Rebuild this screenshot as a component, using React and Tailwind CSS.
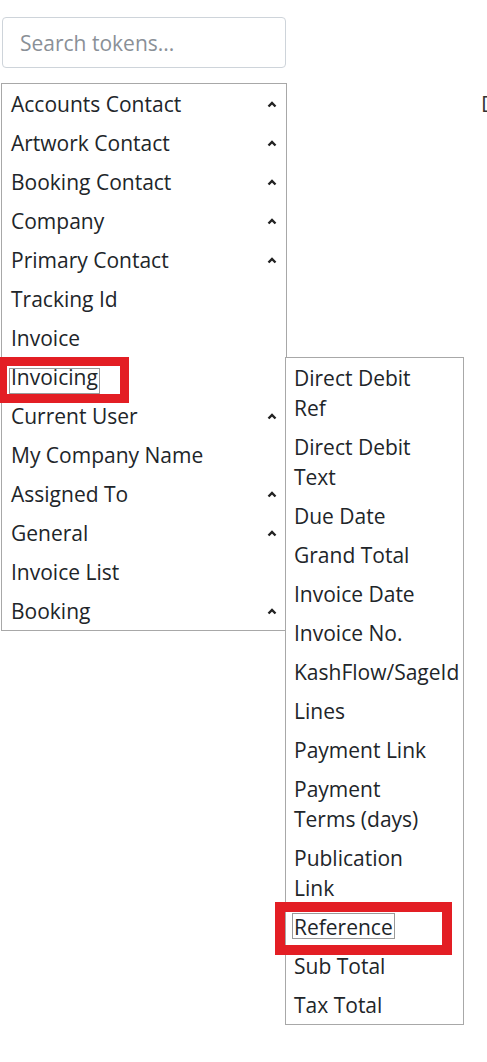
import React from "react";

const mainItems = [
  { label: "Accounts Contact", chevron: true },
  { label: "Artwork Contact", chevron: true },
  { label: "Booking Contact", chevron: true },
  { label: "Company", chevron: true },
  { label: "Primary Contact", chevron: true },
  { label: "Tracking Id" },
  { label: "Invoice" },
  { label: "Invoicing", active: true },
  { label: "Current User", chevron: true },
  { label: "My Company Name" },
  { label: "Assigned To", chevron: true },
  { label: "General", chevron: true },
  { label: "Invoice List" },
  { label: "Booking", chevron: true },
];

const subItems = [
  "Direct Debit Ref",
  "Direct Debit Text",
  "Due Date",
  "Grand Total",
  "Invoice Date",
  "Invoice No.",
  "KashFlow/SageId",
  "Lines",
  "Payment Link",
  "Payment Terms (days)",
  "Publication Link",
  "Reference",
  "Sub Total",
  "Tax Total",
];

function Chevron() {
  return (
    <svg width="10" height="7" viewBox="0 0 10 7" className="shrink-0">
      <path d="M1.5 5.5 L5 2 L8.5 5.5" fill="none" stroke="#222" strokeWidth="2.4" />
    </svg>
  );
}

export default function App() {
  return (
    <div
      className="relative w-[487px] h-[1062px] overflow-hidden bg-white text-[#212529]"
      style={{ fontFamily: '"Open Sans", "Noto Sans", sans-serif' }}
    >
      <div className="flex flex-col items-start gap-[15px] pt-[17px]">
        <input
          type="text"
          placeholder="Search tokens..."
          className="ml-[2px] block w-[284px] h-[51px] rounded-[4px] border border-[#ced4da] bg-white pl-[17px] text-[21px] text-[#212529] placeholder:text-[#8a9097] outline-none"
        />

        <div className="relative ml-[1px] w-[286px] border border-[#a8a8a8] bg-white">
          {mainItems.map((it) => (
            <div
              key={it.label}
              className="flex items-center justify-between pl-[9px] pr-[9px] pt-[5px] pb-[4px] text-[21px] leading-[30px]"
            >
              <span className="whitespace-nowrap">{it.label}</span>
              {it.chevron ? <Chevron /> : null}
            </div>
          ))}

          <div className="absolute left-[283px] top-[273px] w-[179px] border border-[#a8a8a8] bg-white z-10">
            {subItems.map((s) => (
              <div
                key={s}
                className="pl-2 pr-[24px] pt-[5px] pb-[4px] text-[21px] leading-[30px]"
              >
                {s}
              </div>
            ))}
          </div>
        </div>
      </div>

      <span className="absolute left-[481px] top-[89px] text-[21px] leading-[30px] text-[#333]">D</span>

      {/* annotation: focus outlines */}
      <div className="absolute left-[9px] top-[368px] w-[91px] h-[26px] border border-[#9a9a9a] pointer-events-none z-20" />
      <div className="absolute left-[292px] top-[913px] w-[103px] h-[26px] border border-[#9a9a9a] pointer-events-none z-20" />

      {/* annotation: red highlight boxes */}
      <div className="absolute left-[-2px] top-[357px] w-[131px] h-[46px] border-[9px] border-[#e31e24] pointer-events-none z-30" />
      <div className="absolute left-[275px] top-[902px] w-[177px] h-[53px] border-[10px] border-[#e31e24] pointer-events-none z-30" />
    </div>
  );
}
